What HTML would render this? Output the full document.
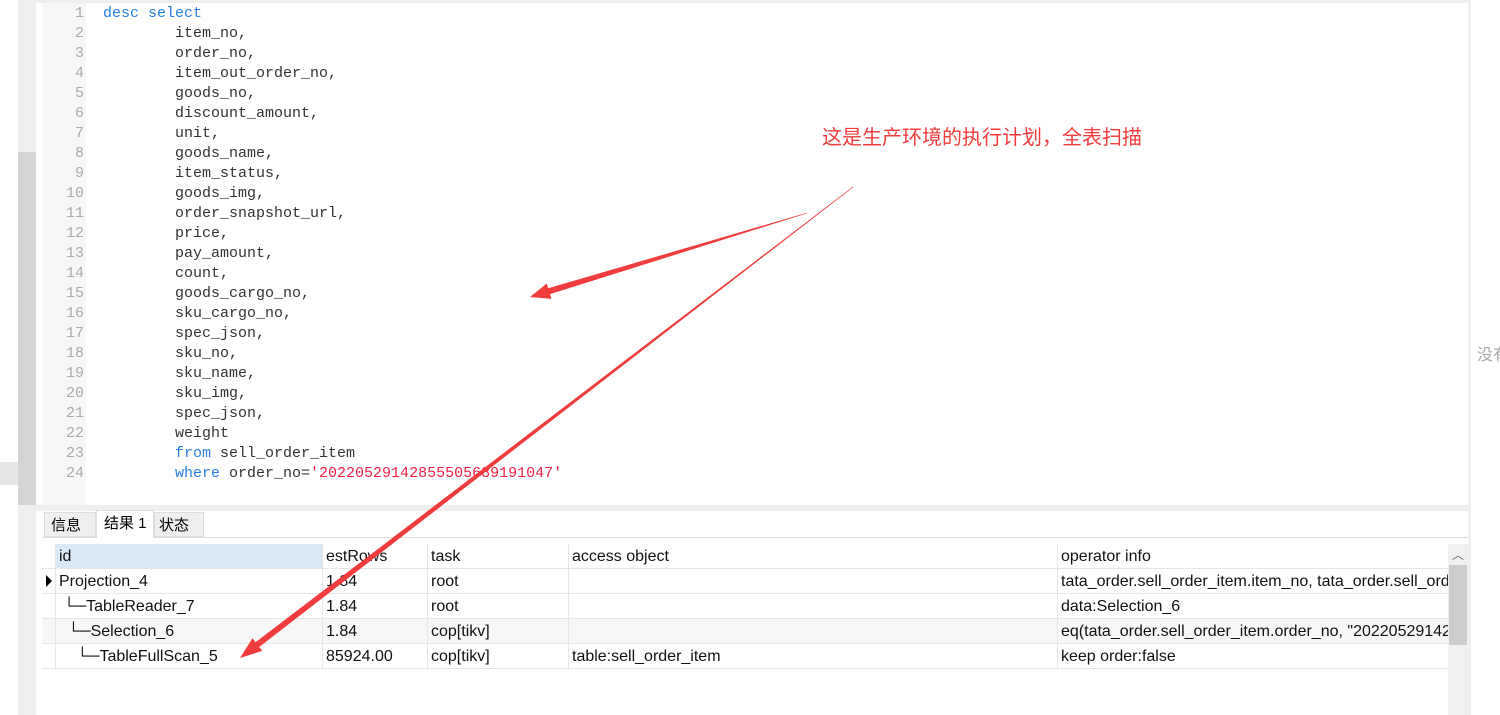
<!DOCTYPE html>
<html><head><meta charset="utf-8"><style>
*{margin:0;padding:0;box-sizing:border-box}
body{width:1500px;height:715px;background:#fff;position:relative;overflow:hidden;font-family:"Liberation Sans","Noto Sans CJK SC",sans-serif}
.abs{position:absolute}
.code{font-family:"Liberation Mono",monospace;font-size:15px;line-height:20px;color:#333;white-space:pre}
.ln{font-family:"Liberation Mono",monospace;font-size:15px;line-height:20px;color:#aaa;text-align:right;white-space:pre}
.k{color:#2a7fe0}.s{color:#ee2244}
.row{position:absolute;left:42px;width:1406px;height:25px;border-bottom:1px solid #e6e6e6;font-size:16px;color:#111;overflow:hidden}
.row div{position:absolute;top:0;height:25px;line-height:25px;padding-left:3px;border-left:1px solid #e6e6e6;white-space:nowrap;overflow:hidden}
</style></head><body>
<div class="abs" style="left:18px;top:0;width:18px;height:715px;background:#efefef"></div>
<div class="abs" style="left:18px;top:152px;width:18px;height:353px;background:#d4d4d4"></div>
<div class="abs" style="left:0;top:462px;width:18px;height:23px;background:#e6e6e6"></div>
<div class="abs" style="left:36px;top:0;width:1434px;height:3px;background:#efefef"></div>
<div class="abs" style="left:1468px;top:0;width:3px;height:715px;background:#efefef"></div>
<div class="abs" style="left:42px;top:3px;width:44px;height:502px;background:#f7f7f7"></div>
<div class="abs" style="left:36px;top:505px;width:1434px;height:6px;background:#efefef"></div>
<div class="abs ln" style="left:42px;top:4px;width:42px">1
2
3
4
5
6
7
8
9
10
11
12
13
14
15
16
17
18
19
20
21
22
23
24</div>
<div class="abs code" style="left:103px;top:4px"><span class="k">desc select</span>
        item_no,
        order_no,
        item_out_order_no,
        goods_no,
        discount_amount,
        unit,
        goods_name,
        item_status,
        goods_img,
        order_snapshot_url,
        price,
        pay_amount,
        count,
        goods_cargo_no,
        sku_cargo_no,
        spec_json,
        sku_no,
        sku_name,
        sku_img,
        spec_json,
        weight
        <span class="k">from</span> sell_order_item
        <span class="k">where</span> order_no=<span class="s">'20220529142855505689191047'</span></div>
<div class="abs" style="left:1477px;top:341px;font-size:16px;color:#aaa;white-space:nowrap">没有</div>
<!-- tabs -->
<div class="abs" style="left:42px;top:537px;width:1426px;height:1px;background:#ddd"></div>
<div class="abs" style="left:44px;top:512px;width:52px;height:25px;background:#efefef;border:1px solid #ddd;font-size:15px;line-height:25px;padding-left:6px">信息</div>
<div class="abs" style="left:96px;top:510px;width:58px;height:28px;background:#fff;border:1px solid #ddd;border-bottom:none;font-size:15px;line-height:26px;padding-left:7px">结果 1</div>
<div class="abs" style="left:154px;top:512px;width:50px;height:25px;background:#efefef;border:1px solid #ddd;font-size:15px;line-height:25px;padding-left:4px">状态</div>
<!-- grid -->
<div class="row" style="top:544px;border-top:none"><div style="left:13px;width:267px;background:#d9e8f6">id</div><div style="left:280px;width:105px">estRows</div><div style="left:385px;width:141px">task</div><div style="left:526px;width:489px">access object</div><div style="left:1015px;width:391px">operator info</div></div>
<div class="row" style="top:569px"><div style="left:13px;width:267px">Projection_4</div><div style="left:280px;width:105px">1.84</div><div style="left:385px;width:141px">root</div><div style="left:526px;width:489px"></div><div style="left:1015px;width:391px">tata_order.sell_order_item.item_no, tata_order.sell_order_item.order_no</div></div>
<div class="abs" style="left:46px;top:575px;width:0;height:0;border-top:6px solid transparent;border-bottom:6px solid transparent;border-left:6px solid #000"></div>
<div class="row" style="top:594px"><div style="left:13px;width:267px">&nbsp;└─TableReader_7</div><div style="left:280px;width:105px">1.84</div><div style="left:385px;width:141px">root</div><div style="left:526px;width:489px"></div><div style="left:1015px;width:391px">data:Selection_6</div></div>
<div class="row" style="top:619px;background:#f7f7f7"><div style="left:13px;width:267px">&nbsp;&nbsp;└─Selection_6</div><div style="left:280px;width:105px">1.84</div><div style="left:385px;width:141px">cop[tikv]</div><div style="left:526px;width:489px"></div><div style="left:1015px;width:391px">eq(tata_order.sell_order_item.order_no, "20220529142855505689191047")</div></div>
<div class="row" style="top:644px"><div style="left:13px;width:267px">&nbsp;&nbsp;&nbsp;&nbsp;└─TableFullScan_5</div><div style="left:280px;width:105px">85924.00</div><div style="left:385px;width:141px">cop[tikv]</div><div style="left:526px;width:489px">table:sell_order_item</div><div style="left:1015px;width:391px">keep order:false</div></div>
<div class="abs" style="left:1448px;top:544px;width:20px;height:171px;background:#f0f0f0"></div>
<div class="abs" style="left:1449px;top:565px;width:18px;height:80px;background:#cdcdcd"></div>
<div class="abs" style="left:1452px;top:546px;font-size:12px;color:#666">︿</div>
<svg class="abs" style="left:0;top:0" width="1500" height="715">
<polygon fill="#f03c3c" points="806.9,212.7 548.2,288.3 546.8,283.5 530,297 551.4,298.9 550.0,294.1 807.1,213.3"/>
<polygon fill="#f03c3c" points="852.8,186.8 255.6,642.2 252.5,638.3 240,658 262.3,650.9 259.2,647.0 853.2,187.2"/>
</svg>
<div class="abs" style="left:822px;top:121px;font-size:20px;color:#f03c3c;font-family:'Noto Sans CJK SC',sans-serif">这是生产环境的执行计划，全表扫描</div>
</body></html>
